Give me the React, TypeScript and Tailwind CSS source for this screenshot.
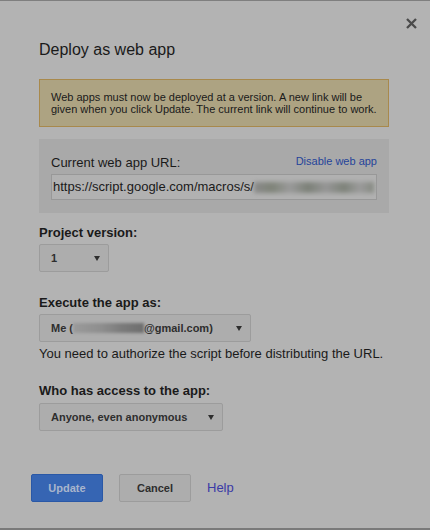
import React from "react";

function Arrow() {
  return (
    <svg width="6" height="5" viewBox="0 0 6 5" className="shrink-0">
      <polygon points="0,0 6,0 3,5" fill="#2e2e2e" />
    </svg>
  );
}

function Select({ width, children }: { width: string; children: React.ReactNode }) {
  return (
    <div
      className={`${width} h-[28px] flex items-center justify-between pl-[11px] pr-[8px] border border-[#9c9c9c] rounded-[2px] bg-[#adadad] text-[11px] font-bold text-[#2e2e2e] leading-none`}
    >
      <div className="flex items-center whitespace-nowrap">{children}</div>
      <Arrow />
    </div>
  );
}

export default function App() {
  return (
    <div
      className="relative w-[430px] h-[530px] bg-[#b3b3b3] border-t border-t-[#7f7f7f] border-b-2 border-b-[#7a7a7a] overflow-hidden"
      style={{ fontFamily: '"Liberation Sans", Arial, sans-serif' }}
    >
      <svg
        className="absolute top-[17px] right-[13px]"
        width="11"
        height="11"
        viewBox="0 0 11 11"
      >
        <path d="M1 1 L10 10 M10 1 L1 10" stroke="#4a4a4a" strokeWidth="2.3" />
      </svg>

      <div className="pl-[39px] pr-[41px] pt-[39px]">
        <div className="text-[16px] leading-[20px] text-[#1a1a1a]">Deploy as web app</div>

        <div className="mt-[19px] border border-[#a8894c] bg-[#ada382] px-[11px] py-[11px] text-[11px] leading-[12px] text-[#1a1a1a]">
          Web apps must now be deployed at a version. A new link will be
          <br />
          given when you click Update. The current link will continue to work.
        </div>

        <div className="mt-[12px] bg-[#a9a9a9] px-[12px] pt-[16px] pb-[13px]">
          <div className="flex justify-between items-start">
            <div className="text-[13px] leading-[16px] text-[#1a1a1a]">Current web app URL:</div>
            <div className="text-[11px] leading-[16px] text-[#25449a] -mt-[2px]">Disable web app</div>
          </div>
          <div className="mt-[3px] h-[26px] border border-[#989898] bg-[#b1b1b1] flex items-center pl-[1px] overflow-hidden whitespace-nowrap text-[13px] text-[#1a1a1a]">
            <span>https://script.google.com/macros/s/</span>
            <div className="flex-1 h-[11px] mr-[2px] blur-[2px] bg-[linear-gradient(90deg,#8a8a8a,#7f8479_15%,#9a9a9a_30%,#7c8178_45%,#969696_60%,#7e837a_75%,#9b9b9b_88%,#868a82)]" />
          </div>
        </div>

        <div className="mt-[12px] text-[13px] leading-[16px] font-bold text-[#1a1a1a]">Project version:</div>
        <div className="mt-[3px]">
          <Select width="w-[70px]">1</Select>
        </div>

        <div className="mt-[23px] text-[13px] leading-[16px] font-bold text-[#1a1a1a]">Execute the app as:</div>
        <div className="mt-[3px]">
          <Select width="w-[212px]">
            <span>Me (</span>
            <span className="inline-block w-[71px] h-[10px] blur-[1.5px] bg-[linear-gradient(90deg,#9a9a9a,#8e8e8e_40%,#7a7a7a_70%,#6e6e6e)]" />
            <span>@gmail.com)</span>
          </Select>
        </div>
        <div className="mt-[4px] text-[13px] leading-[16px] text-[#1a1a1a]">
          You need to authorize the script before distributing the URL.
        </div>

        <div className="mt-[21px] text-[13px] leading-[16px] font-bold text-[#1a1a1a]">Who has access to the app:</div>
        <div className="mt-[4px]">
          <Select width="w-[184px]">Anyone, even anonymous</Select>
        </div>

        <div className="mt-[43px] -ml-[8px] flex items-center">
          <div className="w-[72px] h-[28px] rounded-[2px] border border-[#2a58a6] bg-[#3665b3] flex items-center justify-center text-[11px] font-bold text-[#a9b5cc]">
            Update
          </div>
          <div className="ml-[16px] w-[72px] h-[28px] rounded-[2px] border border-[#9c9c9c] bg-[#adadad] flex items-center justify-center text-[11px] font-bold text-[#2e2e2e]">
            Cancel
          </div>
          <div className="ml-[16px] text-[13px] text-[#3a3aa6]">Help</div>
        </div>
      </div>
    </div>
  );
}
